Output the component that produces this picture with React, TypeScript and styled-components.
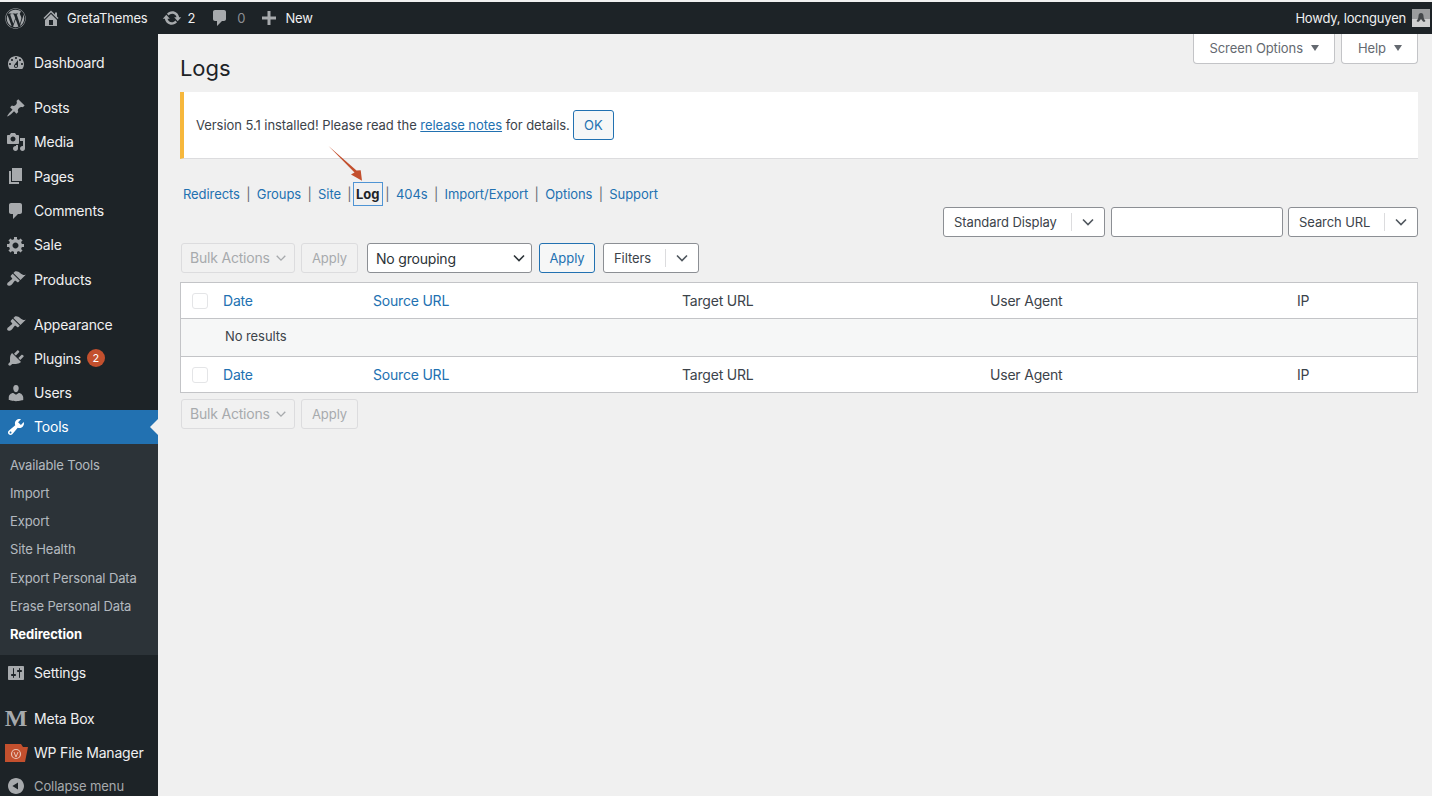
import React from "react";
import styled, { createGlobalStyle } from "styled-components";
import { FaWordpress } from "react-icons/fa";

const paths = {
  dashboard:
    "M3.76 16h12.48c1.1-1.37 1.76-3.11 1.76-5 0-4.42-3.58-8-8-8s-8 3.58-8 8c0 1.89.66 3.63 1.76 5zM10 4c.55 0 1 .45 1 1s-.45 1-1 1-1-.45-1-1 .45-1 1-1zM6 6c.55 0 1 .45 1 1s-.45 1-1 1-1-.45-1-1 .45-1 1-1zm8 0c.55 0 1 .45 1 1s-.45 1-1 1-1-.45-1-1 .45-1 1-1zm-5.37 5.55L12 7v6c0 1.1-.9 2-2 2s-2-.9-2-2c0-.57.24-1.08.63-1.45zM4 10c.55 0 1 .45 1 1s-.45 1-1 1-1-.45-1-1 .45-1 1-1zm12 0c.55 0 1 .45 1 1s-.45 1-1 1-1-.45-1-1 .45-1 1-1zm-5 3c0-.55-.45-1-1-1s-1 .45-1 1 .45 1 1 1 1-.45 1-1z",
  post: "M10.44 3.02l1.82-1.82 6.36 6.35-1.83 1.82c-1.05-.68-2.48-.57-3.41.36l-.75.75c-.92.93-1.04 2.35-.35 3.41l-1.83 1.82-2.41-2.41-2.8 2.79c-.42.42-3.38 2.71-3.8 2.29s1.86-3.39 2.28-3.81l2.79-2.79L4.1 9.36l1.83-1.82c1.05.69 2.48.57 3.4-.36l.75-.75c.93-.92 1.05-2.35.36-3.41z",
  media:
    "M13 11V4c0-.55-.45-1-1-1h-1.67L9 1H5L3.67 3H2c-.55 0-1 .45-1 1v7c0 .55.45 1 1 1h10c.55 0 1-.45 1-1zM7 4.5c1.38 0 2.5 1.12 2.5 2.5S8.38 9.5 7 9.5 4.5 8.38 4.5 7 5.62 4.5 7 4.5zM14 6h5v10.5c0 1.38-1.12 2.5-2.5 2.5S14 17.88 14 16.5s1.12-2.5 2.5-2.5c.17 0 .34.02.5.05V9h-3V6zm-4 8.05V13h2v3.5c0 1.38-1.12 2.5-2.5 2.5S7 17.88 7 16.5 8.12 14 9.5 14c.17 0 .34.02.5.05z",
  page: "M6 15V2h10v13H6zm-1 1h8v2H3V5h2v11z",
  comment: "M5 2h9c1.1 0 2 .9 2 2v7c0 1.1-.9 2-2 2h-2l-5 5v-5H5c-1.1 0-2-.9-2-2V4c0-1.1.9-2 2-2z",
  gear: "M18 12h-2.18c-.17.7-.44 1.35-.81 1.93l1.54 1.54-2.1 2.1-1.54-1.54c-.58.36-1.23.63-1.91.79V19H8v-2.18c-.68-.16-1.33-.43-1.91-.79l-1.54 1.54-2.12-2.12 1.54-1.54c-.36-.58-.63-1.23-.79-1.91H1V9.03h2.17c.16-.7.44-1.35.8-1.94L2.43 5.55l2.1-2.1 1.54 1.54c.58-.37 1.24-.64 1.93-.81V2h3v2.18c.68.16 1.33.43 1.91.79l1.54-1.54 2.12 2.12-1.54 1.54c.36.59.64 1.24.8 1.94H18V12zm-8.5 1.5c1.66 0 3-1.34 3-3s-1.34-3-3-3-3 1.34-3 3 1.34 3 3 3z",
  brush:
    "M14.48 11.06L7.41 3.99l1.5-1.5c.5-.56 2.3-.47 3.51.32 1.21.8 1.43 1.28 2.91 2.1 1.18.64 2.45 1.26 4.45.85zm-.71.71L6.7 4.7 4.93 6.47c-.39.39-.39 1.02 0 1.41l1.06 1.06c.39.39.39 1.03 0 1.42-.6.6-1.43 1.11-2.21 1.69-.35.26-.7.53-1.01.84C1.43 13.23.5 15.31 1.57 16.37c1.07 1.07 3.15.14 4.48-1.19.31-.31.58-.66.84-1.01.58-.78 1.09-1.61 1.69-2.21.39-.39 1.03-.39 1.42 0l1.06 1.06c.39.39 1.02.39 1.41 0z",
  plugin:
    "M13.11 4.36L9.87 7.6 8 5.73l3.24-3.24c.35-.34 1.05-.2 1.56.32.52.51.66 1.21.31 1.55zm-8 1.77l.91-1.12 9.01 9.01-1.19.84c-.71.71-2.63 1.16-3.82 1.16H6.14L4.9 17.26c-.59.59-1.54.59-2.12 0-.59-.58-.59-1.53 0-2.12l1.24-1.24v-3.88c0-1.13.4-3.19 1.09-3.89zm7.26 3.97l3.24-3.24c.34-.35 1.04-.21 1.55.31.52.51.66 1.21.31 1.55l-3.24 3.25z",
  user: "M10 9.25c-2.27 0-2.73-3.44-2.73-3.44C7 4.02 7.82 2 9.97 2c2.16 0 2.98 2.02 2.71 3.81 0 0-.41 3.44-2.68 3.44zm0 2.57L12.72 10c2.39 0 4.52 2.33 4.52 4.53v2.49s-3.65 1.13-7.24 1.13c-3.65 0-7.24-1.13-7.24-1.13v-2.49c0-2.25 1.94-4.48 4.47-4.48z",
  tools:
    "M16.68 9.77c-1.34 1.34-3.3 1.67-4.95.99l-5.41 6.52c-.99.99-2.59.99-3.58 0s-.99-2.59 0-3.57l6.52-5.42c-.68-1.65-.35-3.61.99-4.95 1.28-1.28 3.12-1.62 4.72-1.06l-2.89 2.89 2.82 2.82 2.86-2.87c.53 1.58.18 3.39-1.08 4.65zM3.81 16.21c.4.39 1.04.39 1.43 0 .4-.4.4-1.04 0-1.43-.39-.4-1.03-.4-1.43 0-.39.39-.39 1.03 0 1.43z",
  settings:
    "M18 16V4c0-.55-.45-1-1-1H3c-.55 0-1 .45-1 1v12c0 .55.45 1 1 1h14c.55 0 1-.45 1-1zM8 11h1c.55 0 1 .45 1 1s-.45 1-1 1H8v1.5c0 .28-.22.5-.5.5s-.5-.22-.5-.5V13H6c-.55 0-1-.45-1-1s.45-1 1-1h1V5.5c0-.28.22-.5.5-.5s.5.22.5.5V11zm5-2h-1c-.55 0-1-.45-1-1s.45-1 1-1h1V5.5c0-.28.22-.5.5-.5s.5.22.5.5V7h1c.55 0 1 .45 1 1s-.45 1-1 1h-1v5.5c0 .28-.22.5-.5.5s-.5-.22-.5-.5V9z",
  collapse: "M10 20c5.52 0 10-4.48 10-10S15.52 0 10 0 0 4.48 0 10s4.48 10 10 10zm2.5-14.5v9L5.500 10z",
  home: "M16 8.5l1.53 1.53-1.06 1.06L10 4.62l-6.47 6.47-1.06-1.06L10 2.5l4 4v-2h2v4zm-6-2.46l6 5.99V18H4v-5.97zM12 17v-5H8v5h4z",
  update:
    "M10.2 3.28c3.53 0 6.43 2.61 6.92 6h2.08l-3.5 4-3.5-4h2.32c-.45-1.97-2.21-3.45-4.32-3.45-1.45 0-2.73.71-3.54 1.78L4.95 5.66C6.23 4.2 8.11 3.28 10.2 3.28zm-.4 13.44c-3.52 0-6.43-2.61-6.92-6H.8l3.5-4c1.17 1.33 2.33 2.67 3.5 4H5.48c.45 1.97 2.21 3.45 4.32 3.45 1.45 0 2.73-.71 3.54-1.78l1.71 1.95c-1.28 1.46-3.15 2.38-5.25 2.38z",
  plus: "M17 8.500v3h-5.500V17h-3v-5.500H3v-3h5.500V3h3v5.500z",
};

const Dash = ({ name, size = 20 }: { name: keyof typeof paths; size?: number }) => (
  <svg width={size} height={size} viewBox="0 0 20 20" fill="currentColor">
    <path d={paths[name]} />
  </svg>
);

const Chevron = ({ color = "#50575e", size = 14 }: { color?: string; size?: number }) => (
  <svg width={size} height={size} viewBox="0 0 14 14" fill="none" stroke={color} strokeWidth="1.6">
    <path d="M2 4.500l5 5 5-5" />
  </svg>
);

const GlobalStyle = createGlobalStyle`
  html, body {
    margin: 0;
    height: 100%;
    overflow: hidden;
    background: #f0f0f0;
  }
  body {
    font-family: Inter, "Liberation Sans", sans-serif;
    font-size: 13px;
    color: #3c434a;
    letter-spacing: -0.08px;
  }
  * {
    box-sizing: border-box;
  }
`;

const Page = styled.div`
  position: relative;
  width: 1432px;
  height: 796px;
  overflow: hidden;
  display: flex;
  flex-direction: column;
  padding-top: 2px;
  background: #f0f0f0;
`;

const AdminBar = styled.header`
  height: 32px;
  flex: none;
  display: flex;
  align-items: center;
  justify-content: space-between;
  background: #1d2327;
  color: #f0f0f1;
  padding: 0 2px 0 5px;
`;

const BarGroup = styled.div`
  display: flex;
  align-items: center;
  letter-spacing: -0.2px;
`;

const BarItem = styled.div<{ $gap?: number; $left?: number; $dim?: boolean }>`
  display: flex;
  align-items: center;
  gap: ${(p) => p.$gap ?? 6}px;
  margin-left: ${(p) => p.$left ?? 0}px;
  color: ${(p) => (p.$dim ? "#8c8f94" : "#f0f0f1")};
  font-size: 13px;
  letter-spacing: -0.15px;
  svg {
    color: #a7aaad;
    flex: none;
  }
`;

const Avatar = styled.svg`
  display: block;
  margin-left: 6px;
`;

const Body = styled.div`
  flex: 1;
  display: flex;
  min-height: 0;
`;

const Sidebar = styled.nav`
  width: 158px;
  flex: none;
  background: #1d2327;
  padding-top: 11.4px;
  color: #f0f0f1;
`;

const MenuRow = styled.div<{ $active?: boolean; $gapTop?: number; $dim?: boolean }>`
  position: relative;
  display: flex;
  align-items: center;
  height: 34.3px;
  margin-top: ${(p) => p.$gapTop ?? 0}px;
  padding-left: 6px;
  font-size: 14px;
  letter-spacing: -0.2px;
  color: ${(p) => (p.$active ? "#fff" : p.$dim ? "#a7aaad" : "#f0f0f1")};
  background: ${(p) => (p.$active ? "#2271b1" : "transparent")};
  ${(p) =>
    p.$active &&
    `&::after {
      content: "";
      position: absolute;
      right: 0;
      top: 50%;
      margin-top: -8px;
      border: 8px solid transparent;
      border-right-color: #f0f0f0;
      border-left: 0;
    }`}
`;

const CollapseRow = styled(MenuRow)`
  height: 33px;
`;

const MenuIcon = styled.span<{ $active?: boolean }>`
  width: 20px;
  height: 20px;
  flex: none;
  margin-right: 8px;
  display: flex;
  align-items: center;
  justify-content: center;
  color: ${(p) => (p.$active ? "#fff" : "#a7aaad")};
`;

const MetaLetter = styled.span`
  font-family: "Liberation Serif", serif;
  font-weight: 700;
  font-size: 24px;
  line-height: 20px;
  color: #a7aaad;
`;

const FolderIcon = styled.svg`
  flex: none;
`;

const Badge = styled.span`
  width: 18px;
  height: 18px;
  margin-left: 6px;
  border-radius: 50%;
  background: #c3502e;
  color: #fff;
  font-size: 11px;
  display: flex;
  align-items: center;
  justify-content: center;
`;

const SubMenu = styled.div`
  background: #2c3338;
  padding: 6.7px 0 7.4px;
`;

const SubItem = styled.div<{ $current?: boolean }>`
  height: 28.2px;
  padding-left: 10px;
  display: flex;
  align-items: center;
  font-size: 13px;
  letter-spacing: ${(p) => (p.$current ? "-0.05px" : "-0.12px")};
  font-weight: ${(p) => (p.$current ? 700 : 400)};
  color: ${(p) => (p.$current ? "#fff" : "rgba(240, 246, 252, 0.7)")};
`;

const CollapseLabel = styled.span`
  font-size: 13px;
  letter-spacing: -0.1px;
`;

const Main = styled.main`
  flex: 1;
  padding: 0 14px 0 22px;
  min-width: 0;
`;

const Header = styled.div`
  height: 58px;
  display: flex;
  justify-content: space-between;
  align-items: flex-start;
`;

const Title = styled.h1`
  margin: 20px 0 0;
  font-size: 22px;
  line-height: 28px;
  font-weight: 400;
  color: #1d2327;
`;

const Tabs = styled.div`
  display: flex;
  gap: 6px;
`;

const Tab = styled.div`
  height: 30px;
  padding: 0 15px 2px 16px;
  display: flex;
  align-items: center;
  gap: 8px;
  background: #fff;
  border: 1px solid #c3c4c7;
  border-top: 0;
  border-radius: 0 0 4px 4px;
  color: #646970;
  &::after {
    content: "";
    border: 4.5px solid transparent;
    border-top: 6px solid #646970;
    border-bottom: 0;
  }
`;

const Notice = styled.div`
  height: 67px;
  display: flex;
  align-items: center;
  gap: 3px;
  background: #fff;
  border-left: 4px solid #f6b73c;
  border-bottom: 1px solid #dcdcde;
  padding-left: 12px;
  letter-spacing: -0.06px;
`;

const NoticeLink = styled.a`
  color: #2271b1;
  text-decoration: underline;
`;

const OutlineButton = styled.div<{ $width: number; $left?: number }>`
  width: ${(p) => p.$width}px;
  height: 30px;
  flex: none;
  margin-left: ${(p) => p.$left ?? 0}px;
  display: flex;
  align-items: center;
  justify-content: center;
  border: 1px solid #2271b1;
  border-radius: 3px;
  background: #f6f7f7;
  color: #2271b1;
`;

const SubNav = styled.div`
  height: 24px;
  margin: 23px 0 0 3px;
  display: flex;
  align-items: center;
`;

const NavLink = styled.a`
  color: #2271b1;
`;

const NavCurrent = styled.a`
  padding: 0 2.5px;
  height: 24px;
  display: flex;
  align-items: center;
  margin: 0 2.5px 0 -5.5px;
  border: 1.5px solid #4f94d4;
  color: #1d2327;
  font-weight: 700;
`;

const Sep = styled.span<{ $tight?: boolean }>`
  margin: 0 6.4px 0 ${(p) => (p.$tight ? 0 : 6.4)}px;
  color: #646970;
`;

const DisplayRow = styled.div`
  margin-top: 1px;
  height: 30px;
  display: flex;
  justify-content: flex-end;
  gap: 5px;
`;

const ActionRow = styled.div<{ $top: number }>`
  margin: ${(p) => p.$top}px 0 0 1px;
  height: 30px;
  display: flex;
  align-items: center;
`;

const SplitSelect = styled.div<{ $width: number; $left?: number; $right?: number }>`
  width: ${(p) => p.$width}px;
  height: 30px;
  flex: none;
  margin-left: ${(p) => p.$left ?? 0}px;
  margin-right: ${(p) => p.$right ?? 0}px;
  display: flex;
  align-items: center;
  justify-content: space-between;
  background: #fff;
  border: 1px solid #8c8f94;
  border-radius: 3px;
  padding-left: 10px;
  color: #3c434a;
`;

const SplitArrow = styled.span`
  width: 33px;
  height: 18px;
  display: flex;
  align-items: center;
  justify-content: center;
  border-left: 1px solid #dcdcde;
`;

const SearchInput = styled.input`
  width: 172px;
  height: 30px;
  background: #fff;
  border: 1px solid #8c8f94;
  border-radius: 3px;
`;

const GroupSelect = styled.div`
  width: 165px;
  height: 30px;
  margin-left: 9px;
  display: flex;
  align-items: center;
  justify-content: space-between;
  padding: 0 5px 0 8px;
  background: #fff;
  border: 1px solid #8c8f94;
  border-radius: 3px;
  font-size: 14px;
  letter-spacing: -0.2px;
  color: #2c3338;
`;

const DisabledSelect = styled.div`
  width: 114px;
  height: 30px;
  flex: none;
  display: flex;
  align-items: center;
  gap: 5px;
  padding: 0 0 1px 8px;
  font-size: 14px;
  letter-spacing: -0.2px;
  color: #a7aaad;
  background: #f1f1f1;
  border: 1px solid #dcdcde;
  border-radius: 3px;
`;

const DisabledButton = styled.div`
  width: 57px;
  height: 30px;
  flex: none;
  margin-left: 6px;
  display: flex;
  align-items: center;
  justify-content: center;
  color: #a7aaad;
  background: #f1f1f1;
  border: 1px solid #dcdcde;
  border-radius: 3px;
`;

const Table = styled.table`
  width: 100%;
  margin-top: 9px;
  table-layout: fixed;
  border-collapse: separate;
  border-spacing: 0;
  background: #fff;
  border: 1px solid #c3c4c7;
  font-size: 14px;
  letter-spacing: -0.2px;
`;

const Col = styled.col<{ $width?: number }>`
  width: ${(p) => (p.$width ? `${p.$width}px` : "auto")};
`;

const HeadCell = styled.th<{ $divider?: "bottom" | "top" }>`
  height: 36px;
  padding: 0 8px;
  text-align: left;
  font-weight: 400;
  color: #3c434a;
  border-bottom: ${(p) => (p.$divider === "bottom" ? "1px solid #c3c4c7" : "0")};
  border-top: ${(p) => (p.$divider === "top" ? "1px solid #c3c4c7" : "0")};
  a {
    color: #2271b1;
  }
`;

const CheckCell = styled(HeadCell)`
  padding: 0 0 0 11px;
`;

const Check = styled.span`
  display: block;
  width: 16px;
  height: 16px;
  background: #fff;
  border: 1px solid #e4e5e7;
  border-radius: 3px;
`;

const EmptyCell = styled.td`
  height: 37px;
  padding: 0 0 3px 44px;
  background: #f6f7f7;
  font-size: 13px;
  letter-spacing: -0.08px;
`;

const Arrow = styled.svg`
  position: absolute;
  left: 325px;
  top: 142px;
`;

const topMenu: { label: string; icon: keyof typeof paths; gapTop?: number }[] = [
  { label: "Dashboard", icon: "dashboard" },
  { label: "Posts", icon: "post", gapTop: 10.8 },
  { label: "Media", icon: "media" },
  { label: "Pages", icon: "page" },
  { label: "Comments", icon: "comment" },
  { label: "Sale", icon: "gear" },
  { label: "Products", icon: "brush" },
  { label: "Appearance", icon: "brush", gapTop: 10.6 },
];

const subMenu = [
  "Available Tools",
  "Import",
  "Export",
  "Site Health",
  "Export Personal Data",
  "Erase Personal Data",
];

const columns = ["Date", "Source URL", "Target URL", "User Agent", "IP"];

const HeaderRow = ({ divider }: { divider: "bottom" | "top" }) => (
  <tr>
    <CheckCell $divider={divider}>
      <Check />
    </CheckCell>
    {columns.map((c, i) => (
      <HeadCell key={c} $divider={divider}>
        {i < 2 ? <a>{c}</a> : c}
      </HeadCell>
    ))}
  </tr>
);

const App = () => {
  return (
    <Page>
      <GlobalStyle />
      <AdminBar>
        <BarGroup>
          <BarItem>
            <FaWordpress size={21} />
          </BarItem>
          <BarItem $left={15}>
            <Dash name="home" />
            GretaThemes
          </BarItem>
          <BarItem $left={14} $gap={6}>
            <Dash name="update" />2
          </BarItem>
          <BarItem $left={15} $gap={7} $dim>
            <Dash name="comment" />0
          </BarItem>
          <BarItem $left={14} $gap={6}>
            <Dash name="plus" />
            New
          </BarItem>
        </BarGroup>
        <BarGroup>
          Howdy, locnguyen
          <Avatar width="18" height="18" viewBox="0 0 18 18">
            <rect width="18" height="18" fill="#9a9c9e" />
            <rect y="10" width="18" height="8" fill="#cfd0d1" />
            <path d="M9 4c1.500 0 2.500 1 2.500 3s.5 3 2 5c-1 1-2 1-2.500.5L9 10l-2 2.500c-.5.5-1.500.5-2.500-.5 1.500-2 2-3 2-5s1-3 2.500-3z" fill="#44484b" />
          </Avatar>
        </BarGroup>
      </AdminBar>
      <Body>
        <Sidebar>
          {topMenu.map((m) => (
            <MenuRow key={m.label} $gapTop={m.gapTop}>
              <MenuIcon>
                <Dash name={m.icon} />
              </MenuIcon>
              {m.label}
            </MenuRow>
          ))}
          <MenuRow>
            <MenuIcon>
              <Dash name="plugin" />
            </MenuIcon>
            Plugins
            <Badge>2</Badge>
          </MenuRow>
          <MenuRow>
            <MenuIcon>
              <Dash name="user" />
            </MenuIcon>
            Users
          </MenuRow>
          <MenuRow $active>
            <MenuIcon $active>
              <Dash name="tools" />
            </MenuIcon>
            Tools
          </MenuRow>
          <SubMenu>
            {subMenu.map((s) => (
              <SubItem key={s}>{s}</SubItem>
            ))}
            <SubItem $current>Redirection</SubItem>
          </SubMenu>
          <MenuRow>
            <MenuIcon>
              <Dash name="settings" />
            </MenuIcon>
            Settings
          </MenuRow>
          <MenuRow $gapTop={11.6}>
            <MenuIcon>
              <MetaLetter>M</MetaLetter>
            </MenuIcon>
            Meta Box
          </MenuRow>
          <MenuRow>
            <MenuIcon>
              <FolderIcon width="24" height="20" viewBox="0 0 24 20">
                <path d="M1 1h16l2 3h5l-3 15H1z" fill="#c3502e" />
                <circle cx="12" cy="11" r="4.500" fill="none" stroke="#e9c4b6" strokeWidth="1.200" />
                <path d="M10 9l2 5 2-5" fill="none" stroke="#e9c4b6" strokeWidth="1" />
              </FolderIcon>
            </MenuIcon>
            WP File Manager
          </MenuRow>
          <CollapseRow $dim>
            <MenuIcon>
              <Dash name="collapse" size={16} />
            </MenuIcon>
            <CollapseLabel>Collapse menu</CollapseLabel>
          </CollapseRow>
        </Sidebar>
        <Main>
          <Header>
            <Title>Logs</Title>
            <Tabs>
              <Tab>Screen Options</Tab>
              <Tab>Help</Tab>
            </Tabs>
          </Header>
          <Notice>
            <span>
              Version 5.1 installed! Please read the <NoticeLink>release notes</NoticeLink> for details.
            </span>
            <OutlineButton $width={41}>OK</OutlineButton>
          </Notice>
          <SubNav>
            <NavLink>Redirects</NavLink>
            <Sep>|</Sep>
            <NavLink>Groups</NavLink>
            <Sep>|</Sep>
            <NavLink>Site</NavLink>
            <Sep>|</Sep>
            <NavCurrent>Log</NavCurrent>
            <Sep $tight>|</Sep>
            <NavLink>404s</NavLink>
            <Sep>|</Sep>
            <NavLink>Import/Export</NavLink>
            <Sep>|</Sep>
            <NavLink>Options</NavLink>
            <Sep>|</Sep>
            <NavLink>Support</NavLink>
          </SubNav>
          <DisplayRow>
            <SplitSelect $width={162} $right={1}>
              Standard Display
              <SplitArrow>
                <Chevron />
              </SplitArrow>
            </SplitSelect>
            <SearchInput />
            <SplitSelect $width={130}>
              Search URL
              <SplitArrow>
                <Chevron />
              </SplitArrow>
            </SplitSelect>
          </DisplayRow>
          <ActionRow $top={6}>
            <DisabledSelect>
              Bulk Actions
              <Chevron color="#a7aaad" size={12} />
            </DisabledSelect>
            <DisabledButton>Apply</DisabledButton>
            <GroupSelect>
              No grouping
              <Chevron color="#2c3338" />
            </GroupSelect>
            <OutlineButton $width={56} $left={7}>
              Apply
            </OutlineButton>
            <SplitSelect $width={96} $left={8}>
              Filters
              <SplitArrow>
                <Chevron />
              </SplitArrow>
            </SplitSelect>
          </ActionRow>
          <Table>
            <colgroup>
              <Col $width={34} />
              <Col $width={150} />
              <Col $width={309} />
              <Col $width={308} />
              <Col $width={307} />
              <Col />
            </colgroup>
            <thead>
              <HeaderRow divider="bottom" />
            </thead>
            <tbody>
              <tr>
                <EmptyCell colSpan={6}>No results</EmptyCell>
              </tr>
            </tbody>
            <tfoot>
              <HeaderRow divider="top" />
            </tfoot>
          </Table>
          <ActionRow $top={6}>
            <DisabledSelect>
              Bulk Actions
              <Chevron color="#a7aaad" size={12} />
            </DisabledSelect>
            <DisabledButton>Apply</DisabledButton>
          </ActionRow>
        </Main>
      </Body>
      <Arrow width="42" height="42" viewBox="0 0 42 42">
        <path d="M3.500 4L31.500 28.500 35.700 28.300 37 38.700 26 32.500 29.500 30.500z" fill="#c3502e" />
      </Arrow>
    </Page>
  );
};

export default App;
